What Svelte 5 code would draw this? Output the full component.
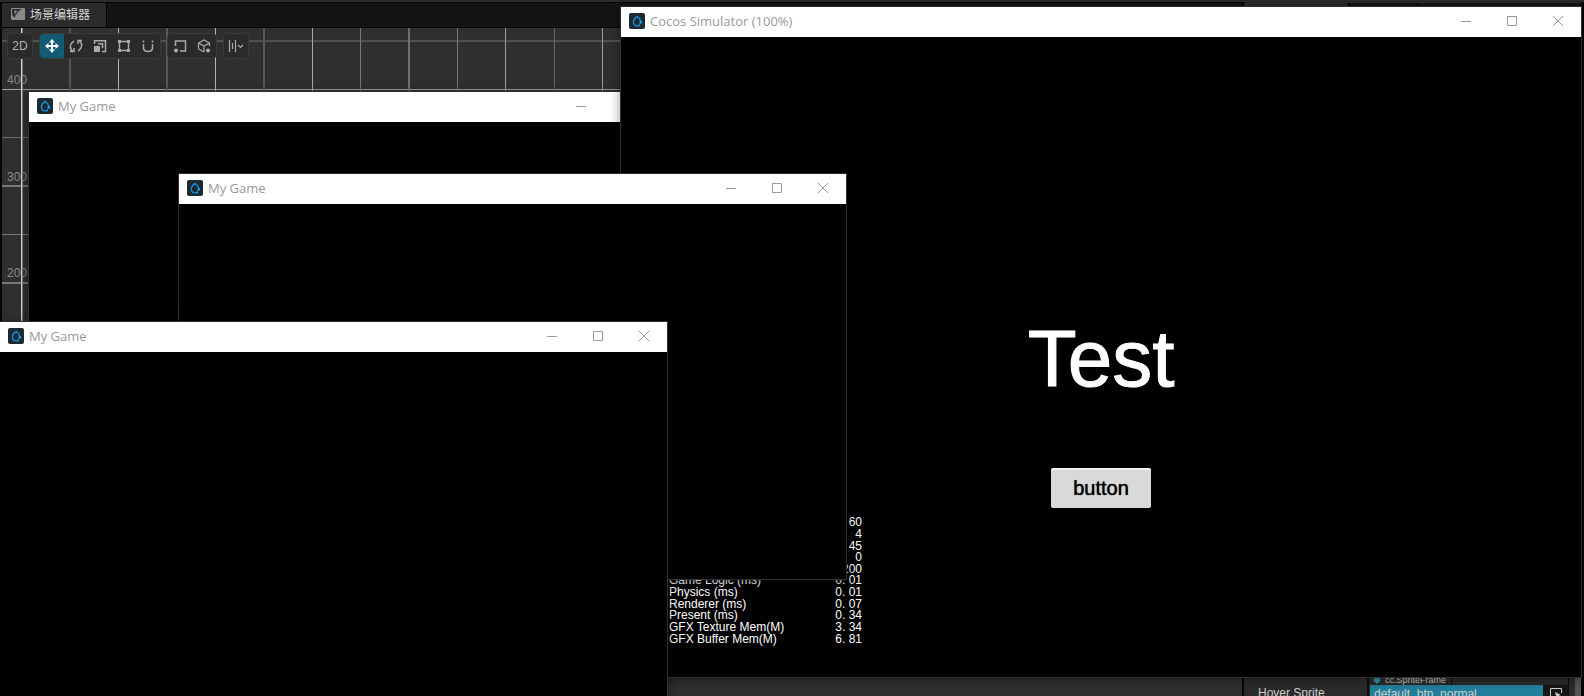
<script lang="ts">
	interface Stat {
		label: string
		value: string
	}

	const columns = [
		{ x: 67, w: 2, c: '#555' },
		{ x: 116, w: 1, c: '#b4b4b4' },
		{ x: 164, w: 2, c: '#585858' },
		{ x: 213, w: 1, c: '#b4b4b4' },
		{ x: 261, w: 2, c: '#585858' },
		{ x: 310, w: 1, c: '#a8a8a8' },
		{ x: 358, w: 1, c: '#777' },
		{ x: 406, w: 2, c: '#707070' },
		{ x: 455, w: 1, c: '#777' },
		{ x: 503, w: 1, c: '#999' },
		{ x: 552, w: 1, c: '#666' },
		{ x: 600, w: 1, c: '#999' }
	]

	const rows = [
		{ y: 12, h: 2, c: '#515151' },
		{ y: 61, h: 1, c: '#a0a0a0' },
		{ y: 109, h: 1, c: '#6c6c6c' },
		{ y: 157, h: 2, c: '#777' },
		{ y: 206, h: 1, c: '#777' },
		{ y: 254, h: 2, c: '#777' }
	]

	const ruler = [
		{ value: 400, y: 56 },
		{ value: 300, y: 153 },
		{ value: 200, y: 249 }
	]

	const stats: Stat[] = [
		{ label: '', value: '60' },
		{ label: '', value: '4' },
		{ label: '', value: '45' },
		{ label: '', value: '0' },
		{ label: '', value: '200' },
		{ label: 'Game Logic (ms)', value: '0. 01' },
		{ label: 'Physics (ms)', value: '0. 01' },
		{ label: 'Renderer (ms)', value: '0. 07' },
		{ label: 'Present (ms)', value: '0. 34' },
		{ label: 'GFX Texture Mem(M)', value: '3. 34' },
		{ label: 'GFX Buffer Mem(M)', value: '6. 81' }
	]

	let sprite = $state('default_btn_normal')
</script>

{#snippet titlebar(title: string)}
	<header class="titlebar">
		<svg class="app-icon" width="16" height="16" viewBox="0 0 16 16">
			<rect width="16" height="16" rx="2" fill="#1d2a32" />
			<path
				d="M7.500 3.500L5 6.500C4.200 8 4.200 10 5 11.500c1 1.800 4.500 2 5.800.5M8.500 3v2M9.500 4.500c1.500 1 2 2.500 2 4.500"
				fill="none"
				stroke="#0aa5f5"
				stroke-width="1.200"
			/>
			<path d="M11 8h2v2.500h-1.500L10 12.500z" fill="#0aa5f5" />
		</svg>
		<h2>{title}</h2>
		<button aria-label="Minimize">
			<svg width="10" height="10" viewBox="0 0 10 10"><path d="M0 5.5h10" /></svg>
		</button>
		<button aria-label="Maximize">
			<svg width="10" height="10" viewBox="0 0 10 10"><path d="M.5.5h9v9h-9z" /></svg>
		</button>
		<button aria-label="Close">
			<svg width="10" height="10" viewBox="0 0 10 10"><path d="M0 0l10 10M10 0L0 10" /></svg>
		</button>
	</header>
{/snippet}

<div class="desktop">
	<div class="editor">
		<div class="scene-panel">
			<div class="tabs">
				<button class="tab">
					<svg width="14" height="12" viewBox="0 0 14 12">
						<rect width="14" height="12" rx="1" fill="#8a8a8a" />
						<path d="M1 1h10L7 3.500 6 6 4.500 7 4 10 2 8 1 5z" fill="#2b2b2b" />
						<path d="M3 3l2-1 1 2-2 2z" fill="#8a8a8a" />
					</svg>
					场景编辑器
				</button>
			</div>
			<div class="scene">
				<svg class="grid" width="100%" height="294">
					{#each rows as line}
						<rect x="0" y={line.y} width="100%" height={line.h} fill={line.c} />
					{/each}
					{#each columns as line}
						<rect x={line.x} y="0" width={line.w} height="100%" fill={line.c} />
					{/each}
					{#each ruler as mark}
						<text x="5" y={mark.y}>{mark.value}</text>
					{/each}
					<rect x="19" y="0" width="1" height="100%" fill="#d8d8d8" />
					<rect x="20" y="0" width="1" height="100%" fill="#777" />
				</svg>
				<div class="toolbar">
					<div class="tools">
						<button>2D</button>
					</div>
					<div class="tools">
						<button class="active" aria-label="Move">
							<svg width="16" height="16" viewBox="0 0 16 16">
								<path
									fill="#fff"
									d="M8 1l3 3.500H9V7h2.500V5L15 8l-3.500 3V9H9v2.500h2L8 15l-3-3.500h2V9H4.500v2L1 8l3.500-3v2H7V4.500H5z"
								/>
							</svg>
						</button>
						<button aria-label="Rotate">
							<svg width="16" height="16" viewBox="0 0 16 16">
								<path
									d="M5 13.500C1 10.500 1.500 6 6 2.800M11 2.500c4 3 3.500 7.500-1 10.700M2 13.500h4V10M14 2.500h-4V6"
								/>
							</svg>
						</button>
						<button aria-label="Scale">
							<svg width="16" height="16" viewBox="0 0 16 16">
								<path d="M2.500 6V2.800h11v10.700H10M6 5.800h4.500V10" />
								<path d="M2 8h6v6H2z" fill="#aaa" stroke="none" />
							</svg>
						</button>
						<button aria-label="Rect">
							<svg width="16" height="16" viewBox="0 0 16 16">
								<path d="M3.500 3.500h9v9h-9z" />
								<path
									d="M2 2h3v3H2zM11 2h3v3h-3zM2 11h3v3H2zM11 11h3v3h-3z"
									fill="#aaa"
									stroke="none"
								/>
							</svg>
						</button>
						<button aria-label="Snap">
							<svg width="16" height="16" viewBox="0 0 16 16">
								<path d="M3.500 6v3.500c0 5.300 9 5.300 9 0V6M3.500 2.500v2M12.500 2.500v2" />
							</svg>
						</button>
					</div>
					<div class="tools">
						<button aria-label="Pivot">
							<svg width="16" height="16" viewBox="0 0 16 16">
								<path d="M3.500 8V3h10v10H8" />
								<circle cx="4" cy="12.500" r="2" fill="#aaa" stroke="none" />
							</svg>
						</button>
						<button aria-label="Local">
							<svg width="16" height="16" viewBox="0 0 16 16">
								<path
									d="M8 14l-5.500-3V5L8 2l5.500 3v3M2.500 5L8 8l5.500-3M8 8v6"
									stroke-width="1.200"
								/>
								<circle cx="12" cy="12.500" r="2" fill="#aaa" stroke="none" />
							</svg>
						</button>
					</div>
					<div class="tools">
						<button aria-label="Align">
							<svg width="16" height="16" viewBox="0 0 16 16">
								<path d="M1.500 2v12M4.500 5v6M7.500 2v12M10 7l2.500 2.500L15 7" stroke-width="1.200" />
							</svg>
						</button>
					</div>
				</div>
			</div>
		</div>
		<aside class="inspector">
			<div class="tabs">
				<span class="inspector-tab"></span>
				<span class="inspector-tab dark"></span>
			</div>
			<div class="property">
				<label for="hover-sprite">Hover Sprite</label>
				<div class="asset">
					<span class="type">
						<svg width="8" height="8" viewBox="0 0 8 8"><path d="M4 0l4 4-4 4-4-4z" fill="#3a93b0" /></svg>
						cc.SpriteFrame
					</span>
					<div class="asset-row">
						<input id="hover-sprite" bind:value={sprite} />
						<button aria-label="Pick asset">
							<svg width="12" height="12" viewBox="0 0 12 12">
								<path d="M4 11.500H.5V.5h11V5" fill="none" stroke="#ccc" />
								<path d="M5 4l6 3-3 1-1 3z" fill="#ccc" />
							</svg>
						</button>
					</div>
				</div>
				<span class="scrollbar"></span>
			</div>
		</aside>
	</div>

	<section class="window game first">
		{@render titlebar('My Game')}
	</section>

	<section class="window simulator">
		{@render titlebar('Cocos Simulator (100%)')}
		<div class="stage">
			<h1>Test</h1>
			<button class="sprite-button">button</button>
			<table class="stats">
				<tbody>
					{#each stats as stat}
						<tr>
							<th scope="row">{stat.label}</th>
							<td>{stat.value}</td>
						</tr>
					{/each}
				</tbody>
			</table>
		</div>
	</section>

	<section class="window game second">
		{@render titlebar('My Game')}
	</section>

	<section class="window game third">
		{@render titlebar('My Game')}
	</section>
</div>

<style>
	:global(body) {
		margin: 0;
		background: #000;
	}

	button {
		margin: 0;
		padding: 0;
		border: 0;
		background: none;
		font: inherit;
		color: inherit;
	}

	.desktop {
		position: relative;
		height: 100vh;
		overflow: hidden;
		font-family: 'Liberation Sans', 'Noto Sans CJK SC', sans-serif;
		font-size: 12px;
	}

	.editor {
		display: flex;
		height: 100%;
		box-sizing: border-box;
		padding: 0 3px 0 2px;
		border-top: 2px solid #2c2c2c;
		background: #050505;
	}

	.scene-panel {
		flex: 1;
		display: flex;
		flex-direction: column;
		margin-right: 2px;
	}

	.tabs {
		display: flex;
		height: 24px;
		margin-top: 1px;
		border-bottom: 1px solid #000;
		background: #141414;
	}

	.tab {
		display: flex;
		align-items: center;
		gap: 5px;
		padding: 0 16px 3px 9px;
		border-right: 1px solid #000;
		background: #2b2b2b;
		color: #d4d4d4;
	}

	.scene {
		position: relative;
		flex: 1;
		background: #2f2f2f;
	}

	.grid {
		display: block;
	}

	.grid text {
		fill: #8a8a8a;
		font-size: 12px;
	}

	.toolbar {
		position: absolute;
		top: 6px;
		left: 6px;
		display: flex;
		gap: 8px;
	}

	.tools {
		display: flex;
		border-radius: 4px;
		background: #2a2a2a;
		box-shadow: 0 0 0 1px #3a3a3a;
		color: #b4b4b4;
		overflow: hidden;
	}

	.tools button {
		display: flex;
		align-items: center;
		justify-content: center;
		width: 24px;
		height: 24px;
	}

	.tools button.active {
		background: #135b75;
	}

	.tools svg {
		fill: none;
		stroke: #aaa;
		stroke-width: 1.5;
	}

	.tools .active svg {
		stroke: none;
	}

	.inspector {
		display: flex;
		flex-direction: column;
		justify-content: space-between;
		width: 337px;
		background: #2b2b2b;
	}

	.inspector-tab {
		width: 104px;
		border-right: 1px solid #000;
		background: #2b2b2b;
	}

	.inspector-tab.dark {
		width: 68px;
		background: none;
	}

	.property {
		display: flex;
		height: 21px;
		overflow: hidden;
		color: #ccc;
	}

	.property label {
		width: 123px;
		box-sizing: border-box;
		padding: 11px 0 0 14px;
		line-height: 14px;
	}

	.asset {
		flex: 1;
		padding-left: 1px;
		border: solid #0c0c0c;
		border-width: 0 1px 0 2px;
		background: #2b2b2b;
	}

	.type {
		display: flex;
		align-items: center;
		gap: 4px;
		width: fit-content;
		height: 10px;
		padding: 0 5px 0 3px;
		border-right: 1px solid #0c0c0c;
		font-size: 9px;
		line-height: 10px;
	}

	.asset-row {
		display: flex;
		height: 20px;
		background: #161616;
	}

	.asset-row input {
		flex: 1;
		min-width: 0;
		padding: 0 4px 2px;
		border: 0;
		background: #227f9b;
		color: #ccc;
		font: inherit;
	}

	.asset-row button {
		width: 25px;
	}

	.scrollbar {
		width: 6px;
		margin: 0 0 0 6px;
		background: #555;
	}

	.window {
		position: absolute;
		border: 1px solid #303030;
		background: #000;
		box-shadow: 0 2px 10px rgba(0, 0, 0, 0.4);
	}

	.game {
		width: 667px;
		height: 405px;
	}

	.first {
		top: 91px;
		left: 28px;
	}

	.second {
		top: 173px;
		left: 178px;
	}

	.third {
		top: 321px;
		left: -1px;
	}

	.simulator {
		top: 6px;
		left: 620px;
		width: 960px;
	}

	.titlebar {
		display: flex;
		align-items: center;
		height: 30px;
		box-sizing: border-box;
		padding: 0 0 2px 8px;
		background: #fff;
		color: #999;
	}

	.titlebar h2 {
		flex: 1;
		margin: 0 0 0 5px;
		font: 13px/18px 'Open Sans', sans-serif;
	}

	.titlebar button {
		display: flex;
		align-items: center;
		justify-content: center;
		width: 46px;
		height: 28px;
	}

	.titlebar button svg {
		fill: none;
		stroke: #999;
	}

	.stage {
		position: relative;
		display: flex;
		flex-direction: column;
		align-items: center;
		height: 640px;
		box-sizing: border-box;
		padding-top: 282px;
	}

	.stage h1 {
		margin: 0 0 69px;
		color: #fff;
		font-size: 80px;
		font-weight: normal;
		line-height: 80px;
		-webkit-text-stroke: 1px #fff;
	}

	.sprite-button {
		width: 100px;
		height: 40px;
		padding-bottom: 2px;
		border-top: 2px solid #f2f2f2;
		border-radius: 2px;
		background: #d9d9d9;
		color: #000;
		font-size: 20px;
		text-shadow: 0 0 1px #000;
	}

	.stats {
		position: absolute;
		bottom: 32px;
		left: 48px;
		width: 193px;
		height: 128px;
		border-collapse: collapse;
		color: #fff;
		line-height: 11px;
	}

	.stats th,
	.stats td {
		padding: 0;
		font-weight: normal;
		text-align: left;
		white-space: nowrap;
	}

	.stats td {
		text-align: right;
	}
</style>
